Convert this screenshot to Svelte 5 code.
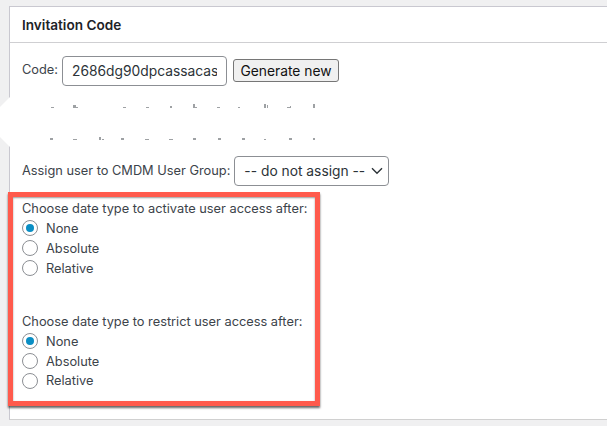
<script>
  const specksTop = [[41,3,1],[63,3,3],[66,2,1],[113,3,1],[136,3,1],[160,2,2],[183,2,4],[185,2,1],[207,3,1],[228,2,1],[254,2,4],[257,1,3],[277,3,1],[280,1,2],[303,2,4]];
  const specksBottom = [[40,3,2],[63,4,1],[89,2,3],[92,2,1],[111,3,2],[135,4,1],[159,4,1],[183,3,2],[208,3,2],[232,3,2],[254,2,1],[279,3,2],[303,2,2]];
  const groups = [
    { title: 'Choose date type to activate user access after:', name: 'activate' },
    { title: 'Choose date type to restrict user access after:', name: 'restrict' }
  ];
  const options = ['None', 'Absolute', 'Relative'];
</script>

<div class="page">
  <section class="panel">
    <h2>Invitation Code</h2>
    <div class="body">
      <div class="code-row">
        <label for="code">Code:</label>
        <input id="code" type="text" value="2686dg90dpcassacasdfgh" />
        <button type="button">Generate new</button>
      </div>

      <svg class="specks" width="320" height="52" viewBox="0 0 320 52" aria-hidden="true">
        {#each specksTop as s}
          <rect x={s[0]} y={6 - s[2]} width={s[1]} height={s[2]} fill="#6a6e73" opacity="0.65" />
        {/each}
        {#each specksBottom as s}
          <rect x={s[0]} y={38 - s[2]} width={s[1]} height={s[2]} fill="#6a6e73" opacity="0.65" />
        {/each}
      </svg>

      <div class="assign-row">
        <label for="group">Assign user to CMDM User Group:</label>
        <div class="select">
          <select id="group"><option>-- do not assign --</option></select>
          <svg width="12" height="8" viewBox="0 0 12 8" aria-hidden="true"><path d="M1 1.2 6 6.2 11 1.2" fill="none" stroke="#2c3338" stroke-width="1.4" /></svg>
        </div>
      </div>

      {#each groups as group, g}
        <fieldset class="group" class:second={g === 1}>
          <legend>{group.title}</legend>
          {#each options as option, i}
            <label class="radio" class:tight={g === 1 && i === 2}>
              <input type="radio" name={group.name} checked={i === 0} />
              <span>{option}</span>
            </label>
          {/each}
        </fieldset>
      {/each}
    </div>
    <div class="annotation"></div>
    <div class="erase"></div>
  </section>
</div>

<style>
  :global(body) {
    margin: 0;
    background: #f0f0f1;
  }
  .page {
    height: 426px;
    overflow: hidden;
    padding-top: 6px;
    box-sizing: border-box;
    font-family: Inter, "Liberation Sans", sans-serif;
    font-size: 12.8px;
    color: #3c434a;
  }
  .panel {
    position: relative;
    margin-left: 9px;
    height: 414px;
    box-sizing: border-box;
    background: #fff;
    border: 1px solid #c9c8d0;
    border-right: 0;
    border-bottom-color: #d0d0d0;
  }
  h2 {
    margin: 0;
    height: 36px;
    box-sizing: border-box;
    padding: 0 0 0 12px;
    line-height: 36px;
    font-size: 13.6px;
    font-weight: 600;
    color: #1d2327;
    border-bottom: 1px solid #cfcfd2;
  }
  .body {
    padding: 13px 0 0 12px;
  }
  .code-row {
    display: flex;
    align-items: center;
    height: 29px;
  }
  .code-row label {
    margin-top: -3px;
  }
  #code {
    width: 165px;
    height: 30px;
    box-sizing: border-box;
    margin: 0 6px 0 4px;
    padding: 0 9px;
    font: 13.8px Inter, "Liberation Sans", sans-serif;
    color: #2c3338;
    border: 1px solid #8c8f94;
    border-radius: 4px;
    background: #fff;
    outline: none;
  }
  button {
    width: 106px;
    height: 23px;
    padding: 0;
    font: 13.8px Inter, "Liberation Sans", sans-serif;
    color: #111;
    background: #f0f0f0;
    border: 1px solid #767676;
    border-radius: 3px;
  }
  .specks {
    display: block;
    margin: 15px 0 0 -12px;
    height: 56px;
  }
  .assign-row {
    display: flex;
    align-items: center;
    height: 29px;
  }
  .select {
    position: relative;
    margin-left: 4px;
    display: flex;
  }
  select {
    appearance: none;
    width: 155px;
    height: 30px;
    padding: 0 9px;
    font: 13.8px Inter, "Liberation Sans", sans-serif;
    color: #2c3338;
    background: #fff;
    border: 1px solid #8c8f94;
    border-radius: 4px;
  }
  .select svg {
    position: absolute;
    right: 6px;
    top: 11px;
  }
  .group {
    margin: 15px 0 0;
    padding: 0;
    border: 0;
    display: flex;
    flex-direction: column;
  }
  .group.second {
    margin-top: 35px;
  }
  legend {
    padding: 0;
    line-height: 18px;
    height: 18px;
  }
  .radio {
    display: flex;
    align-items: center;
    height: 20px;
  }
  .radio.tight {
    height: 19px;
  }
  .radio input {
    appearance: none;
    width: 16px;
    height: 16px;
    margin: 0 8px 0 0;
    box-sizing: border-box;
    border: 1px solid #8c8f94;
    border-radius: 50%;
    background: #fff;
    display: grid;
    place-items: center;
  }
  .radio input:checked::before {
    content: "";
    width: 8px;
    height: 8px;
    border-radius: 50%;
    background: #0a8ec4;
  }
  .annotation {
    position: absolute;
    left: -2px;
    top: 185px;
    width: 312px;
    height: 214px;
    box-sizing: border-box;
    border: 5px solid #ff5a4c;
    box-shadow: 0 2px 2px rgba(0, 0, 0, 0.6), inset 0 1px 2px rgba(0, 0, 0, 0.4);
    pointer-events: none;
  }
  .erase {
    position: absolute;
    left: -10px;
    top: 90px;
    width: 40px;
    height: 50px;
    background: #fff;
    clip-path: polygon(0 10px, 10px 0, 100% 0, 100% 100%, 10px 100%, 0 40px);
    pointer-events: none;
  }
</style>
